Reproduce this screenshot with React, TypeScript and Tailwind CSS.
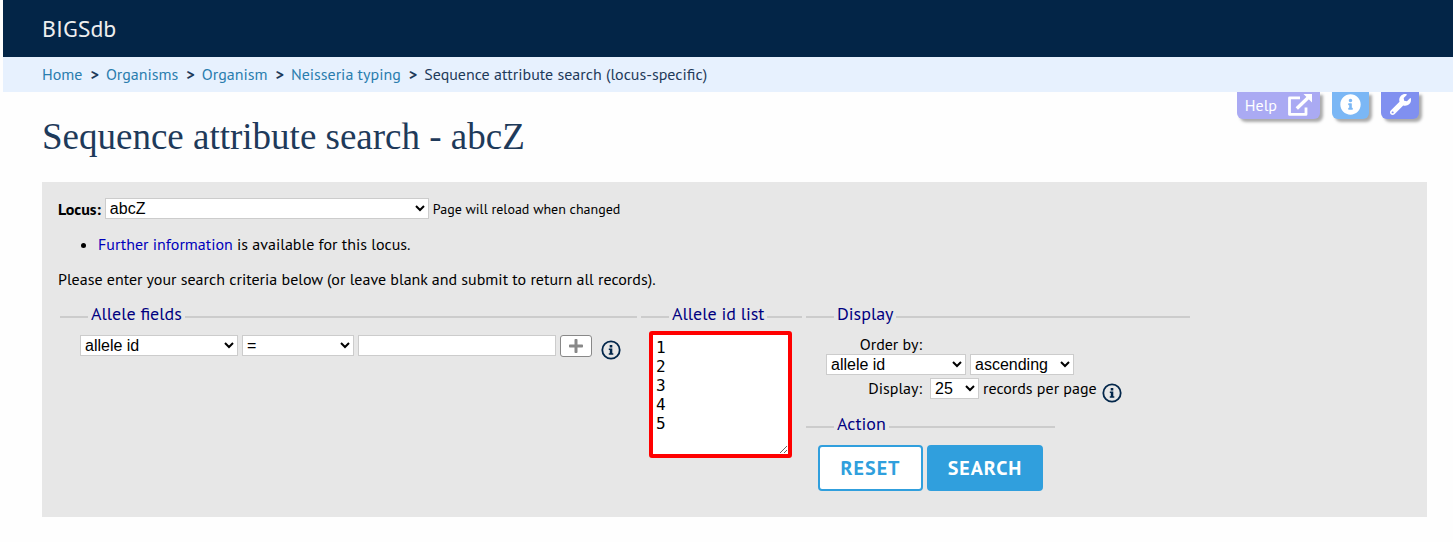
import { ReactNode, SelectHTMLAttributes } from "react";
import { FaInfoCircle, FaPlus, FaWrench } from "react-icons/fa";

const crumbs = ["Home", "Organisms", "Organism", "Neisseria typing"];

function Select({ className, ...props }: SelectHTMLAttributes<HTMLSelectElement>) {
  return (
    <select
      {...props}
      className={`h-[21px] border border-[#ccc] bg-white font-['Liberation_Sans',Arial,sans-serif] text-base leading-[18px] text-black ${className}`}
    />
  );
}

function Group({ title, children }: { title: string; children: ReactNode }) {
  return (
    <fieldset className="border-t-2 border-[#ccc]">
      <legend className="ml-7 px-[3px] pb-1.5 text-lg leading-5 text-[#000080]">{title}</legend>
      {children}
    </fieldset>
  );
}

function InfoButton({ label }: { label: string }) {
  return (
    <button type="button" aria-label={label} className="mt-[5px] ml-[5px] text-[#03274b]">
      <svg viewBox="0 0 20 20" className="size-5" fill="none">
        <circle cx="10" cy="10" r="8.7" stroke="currentColor" strokeWidth="1.8" />
        <path
          fill="currentColor"
          d="M8.7 5h2.6v2.4H8.7zM7.8 8.5h3.5v4.8h1v1.5H7.8v-1.5h1V10h-1z"
        />
      </svg>
    </button>
  );
}

function ExternalLinkIcon() {
  return (
    <svg viewBox="0 0 24 22" className="h-[22px] w-6" fill="none" aria-hidden="true">
      <path d="M12 3.9H1.5V20.4H18V13.5" stroke="currentColor" strokeWidth="2.8" strokeLinejoin="round" />
      <path d="M8.8 14.4L20 3.8" stroke="currentColor" strokeWidth="3.4" />
      <path d="M15.5 0H24V8.5Z" fill="currentColor" />
    </svg>
  );
}

export default function App() {
  return (
    <div className="min-h-screen bg-[#fefefe] pl-[3px] font-['PT_Sans','Noto_Sans',sans-serif] text-base leading-5 text-black">
      <header className="flex h-[57px] items-center bg-[#032547] pl-[39px] text-2xl text-[#eee]">
        BIGSdb
      </header>
      <nav aria-label="Breadcrumb" className="flex h-[35px] items-center bg-[#e7f1fe] pb-0.5 pl-[39px] text-[#1e3a5a]">
        {crumbs.map((crumb) => (
          <span key={crumb} className="flex">
            <a href="#" className="text-[#2a7dae]">{crumb}</a>
            <span className="pr-[7px] pl-2 font-bold">&gt;</span>
          </span>
        ))}
        <span>Sequence attribute search (locus-specific)</span>
      </nav>

      <main className="pr-[26px] pl-[39px]">
        <div className="flex h-[90px] items-start justify-between">
          <h1 className="pt-5 font-['Liberation_Serif',serif] text-[37px] leading-[50px] text-[#1e3a5a]">
            Sequence attribute search - abcZ
          </h1>
          <div className="flex gap-3 pr-2 text-white">
            <a href="#" className="flex h-[27px] items-center gap-[11px] rounded-b-md bg-[#aaaaf3] px-2 pb-0.5 shadow-[3px_3px_3px_#aaa]">
              Help
              <ExternalLinkIcon />
            </a>
            <button type="button" aria-label="Information" className="flex h-[27px] w-[37px] items-center justify-center rounded-b-md bg-[#7bb7f5] pb-0.5 shadow-[3px_3px_3px_#aaa]">
              <FaInfoCircle className="size-[21px]" />
            </button>
            <button type="button" aria-label="Settings" className="flex h-[27px] w-[38px] items-center justify-center rounded-b-md bg-[#8090f0] pb-0.5 shadow-[3px_3px_3px_#aaa]">
              <FaWrench className="size-[21px]" />
            </button>
          </div>
        </div>

        <form className="bg-[#e7e7e7] px-4 pt-4 pb-[26px]" onSubmit={(e) => e.preventDefault()}>
          <div className="flex items-center gap-1">
            <label htmlFor="locus" className="font-bold">Locus:</label>
            <Select id="locus" className="w-[324px]"><option>abcZ</option></Select>
            <span className="text-sm">Page will reload when changed</span>
          </div>
          <ul className="mt-[15px] list-disc pl-10">
            <li><a href="#" className="text-[#0000bb]">Further information</a> is available for this locus.</li>
          </ul>
          <p className="mt-[15px]">Please enter your search criteria below (or leave blank and submit to return all records).</p>

          <div className="mt-[15px] flex flex-wrap items-start gap-1 pl-0.5">
            <Group title="Allele fields">
              <div className="flex items-start gap-1 pt-[5px] pr-4 pl-5">
                <Select aria-label="Field" className="w-[158px]"><option>allele id</option></Select>
                <Select aria-label="Comparison" className="w-28"><option>=</option></Select>
                <input type="text" aria-label="Value" className="h-[21px] w-[198px] border border-[#ccc] bg-white px-1" />
                <button type="button" aria-label="Add field" className="flex h-[22px] w-8 items-center justify-center rounded-[3px] border border-[#888] bg-white text-[#888]">
                  <FaPlus className="size-4" />
                </button>
                <InfoButton label="Search help" />
              </div>
            </Group>

            <Group title="Allele id list">
              <div className="px-2 pt-px pr-2.5">
                <textarea
                  aria-label="Allele id list"
                  defaultValue={"1\n2\n3\n4\n5"}
                  className="block h-[127px] w-[143px] rounded-[3px] border-4 border-[#f00] bg-white px-[3px] py-[3px] font-['DejaVu_Sans_Mono',monospace] text-base leading-[19px]"
                />
              </div>
            </Group>

            <div>
              <Group title="Display">
                <div className="pt-[5px] pr-[68px] pl-5">
                  <label htmlFor="order" className="block w-24 text-right leading-[19px]">Order by:</label>
                  <div className="flex gap-1">
                    <Select id="order" className="w-[140px]"><option>allele id</option></Select>
                    <Select aria-label="Direction" className="w-[104px]"><option>ascending</option></Select>
                  </div>
                  <div className="flex pt-[3px]">
                    <label htmlFor="count" className="mr-2 w-24 text-right">Display:</label>
                    <Select id="count" className="mr-1 w-[49px]"><option>25</option></Select>
                    <span>records per page</span>
                    <InfoButton label="Display help" />
                  </div>
                </div>
              </Group>
              <div className="flex pt-[11px]">
                <Group title="Action">
                  <div className="flex gap-1 px-3 pt-[5px] text-xl font-bold tracking-wider">
                    <button type="reset" className="h-[46px] w-[105px] rounded border-2 border-[#309fdd] bg-white text-[#309fdd]">RESET</button>
                    <button type="submit" className="h-[46px] w-[116px] rounded border-2 border-[#309fdd] bg-[#309fdd] text-white">SEARCH</button>
                  </div>
                </Group>
              </div>
            </div>
          </div>
        </form>
      </main>
    </div>
  );
}
